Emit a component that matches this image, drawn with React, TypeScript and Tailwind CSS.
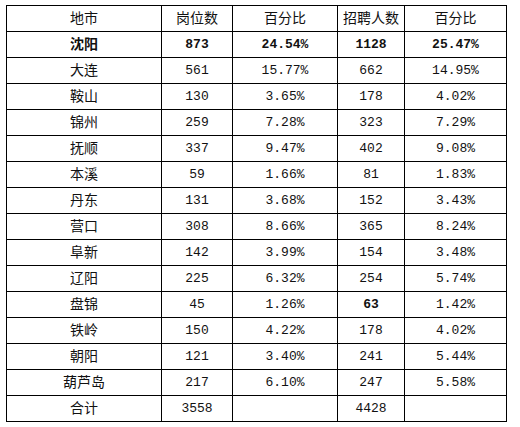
import React from 'react'

type Row = [string, string, string, string, string]

const header: Row = ['地市', '岗位数', '百分比', '招聘人数', '百分比']

const rows: Row[] = [
  ['沈阳', '873', '24.54%', '1128', '25.47%'],
  ['大连', '561', '15.77%', '662', '14.95%'],
  ['鞍山', '130', '3.65%', '178', '4.02%'],
  ['锦州', '259', '7.28%', '323', '7.29%'],
  ['抚顺', '337', '9.47%', '402', '9.08%'],
  ['本溪', '59', '1.66%', '81', '1.83%'],
  ['丹东', '131', '3.68%', '152', '3.43%'],
  ['营口', '308', '8.66%', '365', '8.24%'],
  ['阜新', '142', '3.99%', '154', '3.48%'],
  ['辽阳', '225', '6.32%', '254', '5.74%'],
  ['盘锦', '45', '1.26%', '63', '1.42%'],
  ['铁岭', '150', '4.22%', '178', '4.02%'],
  ['朝阳', '121', '3.40%', '241', '5.44%'],
  ['葫芦岛', '217', '6.10%', '247', '5.58%'],
  ['合计', '3558', '', '4428', ''],
]

function Cell({ text, bold }: { text: string; bold?: boolean }) {
  const numeric = /^[0-9.%]+$/.test(text)
  return (
    <div
      className={
        'flex h-[26px] items-center justify-center border-r border-b border-black leading-none text-[#111] ' +
        (numeric ? 'text-[13px] ' : 'text-[14px] ') +
        (bold ? 'font-bold' : 'font-normal')
      }
    >
      {text}
    </div>
  )
}

export default function App() {
  return (
    <div className="min-h-[427px] w-[520px] bg-white pt-[5px] pl-[6px] font-['Liberation_Mono','Noto_Sans_CJK_SC',monospace]">
      <div className="grid w-[501px] grid-cols-[155px_71px_105px_67px_102px] border-t border-l border-black">
        {header.map((h, i) => (
          <Cell key={'h' + i} text={h} />
        ))}
        {rows.map((r, ri) =>
          r.map((c, ci) => (
            <Cell
              key={ri + '-' + ci}
              text={c}
              bold={ri === 0 || (ri === 10 && ci === 3)}
            />
          ))
        )}
      </div>
    </div>
  )
}
